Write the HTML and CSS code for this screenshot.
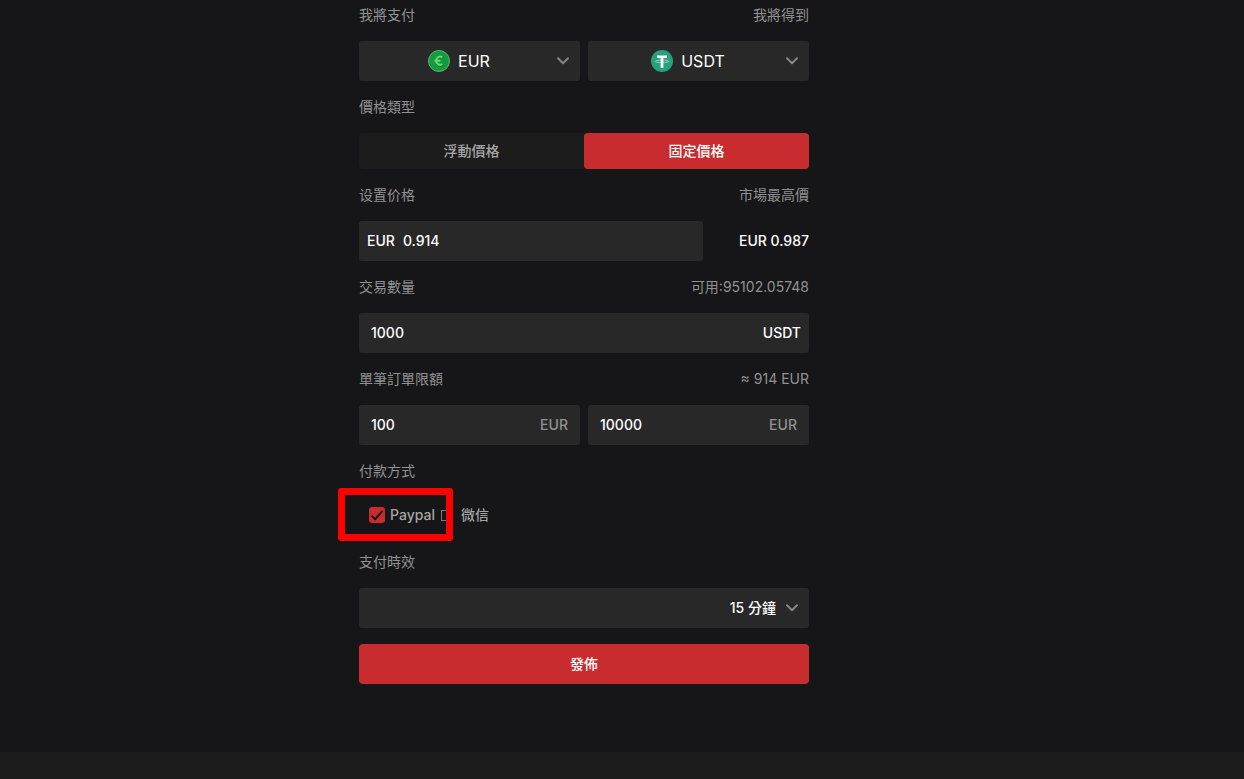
FILE: index.html
```
<!DOCTYPE html>
<html lang="zh-Hant">
<head>
<meta charset="UTF-8" />
<meta name="viewport" content="width=device-width, initial-scale=1" />
<title>發佈</title>
<link rel="stylesheet" href="styles.css">
</head>
<body>
  <main>
    <form class="order-form">
      <!-- Currency pair -->
      <div class="label-row">
        <label for="pay">我將支付</label>
        <label for="receive">我將得到</label>
      </div>
      <div class="columns">
        <div class="field picker">
          <div class="coin">
            <svg class="coin-icon" viewBox="0 0 22 22" aria-hidden="true">
              <circle cx="11" cy="11" r="10.5" fill="#159a3c" stroke="#58b671"/>
              <path d="M15 7.6A4.3 4.3 0 1 0 15 14.8" fill="none" stroke="#0b7a2b" stroke-width="2.4"/>
              <path d="M14.4 7.4A4 4 0 1 0 14.4 14" fill="none" stroke="#62dc7b" stroke-width="2"/>
              <path d="M6.4 10.7h6" stroke="#62dc7b" stroke-width="1.8"/>
            </svg>
            <select id="pay"><option>EUR</option></select>
          </div>
          <svg class="chevron" viewBox="0 0 12 8" aria-hidden="true"><path d="M1 1.2l5 5 5-5"/></svg>
        </div>
        <div class="field picker">
          <div class="coin">
            <svg class="coin-icon" viewBox="0 0 22 22" aria-hidden="true">
              <circle cx="11" cy="11" r="11" fill="#26a17b"/>
              <ellipse cx="11" cy="11.4" rx="6.8" ry="1.3" fill="none" stroke="#a9dccb" stroke-width=".8"/>
              <path d="M6 5.4h10v2.6h-3.6v9.8H9.6V8H6z" fill="#fff"/>
            </svg>
            <select id="receive"><option>USDT</option></select>
          </div>
          <svg class="chevron" viewBox="0 0 12 8" aria-hidden="true"><path d="M1 1.2l5 5 5-5"/></svg>
        </div>
      </div>

      <!-- Price -->
      <div class="label-row"><span>價格類型</span></div>
      <div class="segment">
        <button type="button">浮動價格</button>
        <button type="button" class="active">固定價格</button>
      </div>
      <div class="label-row">
        <label for="price">设置价格</label>
        <span>市場最高價</span>
      </div>
      <div class="price-row">
        <div class="field price-field">
          <span>EUR</span>
          <input id="price" type="text" value="0.914">
        </div>
        <span class="market-price">EUR 0.987</span>
      </div>

      <!-- Amount and limits -->
      <div class="label-row">
        <label for="amount">交易數量</label>
        <span>可用:95102.05748</span>
      </div>
      <div class="field amount-field">
        <input id="amount" type="text" value="1000">
        <span>USDT</span>
      </div>
      <div class="label-row">
        <label for="min">單筆訂單限額</label>
        <span>≈ 914 EUR</span>
      </div>
      <div class="columns">
        <div class="field">
          <input id="min" type="text" value="100">
          <span class="unit">EUR</span>
        </div>
        <div class="field">
          <input type="text" value="10000" aria-label="最高限額">
          <span class="unit">EUR</span>
        </div>
      </div>

      <!-- Payment -->
      <div class="label-row"><span>付款方式</span></div>
      <div class="methods">
        <label><input type="checkbox" checked>Paypal</label>
        <label><input type="checkbox">微信</label>
        <div class="highlight"></div>
      </div>
      <div class="label-row"><label for="time">支付時效</label></div>
      <div class="field time-field">
        <select id="time"><option>15 分鐘</option></select>
        <svg class="chevron" viewBox="0 0 12 8" aria-hidden="true"><path d="M1 1.2l5 5 5-5"/></svg>
      </div>
      <button type="submit" class="submit">發佈</button>
    </form>
  </main>
  <footer></footer>
</body>
</html>
```
FILE: styles.css
```
*, *::before {
  box-sizing: border-box;
}

body {
  margin: 0;
  min-height: 100vh;
  display: flex;
  flex-direction: column;
  background: #161618;
  color: #fff;
  font-family: Inter, "Noto Sans CJK TC", sans-serif;
  font-size: 14px;
  line-height: 20px;
}

input, select, button {
  font: inherit;
  color: inherit;
  background: none;
  border: none;
  padding: 0;
  margin: 0;
}

select {
  appearance: none;
  field-sizing: content;
  cursor: pointer;
}

option {
  background: #282828;
}

button {
  cursor: pointer;
}

main {
  width: 100%;
  max-width: 526px;
  margin: 0 auto;
  padding: 5px 76px 68px 0;
}

.label-row {
  display: flex;
  justify-content: space-between;
  padding: 16px 0;
  color: #919191;
}

.label-row:first-child {
  padding-top: 0;
}

.columns {
  display: grid;
  grid-template-columns: 1fr 1fr;
  gap: 8px;
}

.field {
  display: flex;
  align-items: center;
  min-width: 0;
  height: 40px;
  padding: 0 12px;
  border-radius: 3px;
  background: #282828;
  font-weight: 500;
}

.field input {
  flex: 1;
  min-width: 0;
}

.unit {
  color: #919191;
}

.picker {
  padding: 0 11px 0 2px;
  font-size: 16px;
  font-weight: 400;
}

.coin {
  flex: 1;
  display: flex;
  align-items: center;
  justify-content: center;
  gap: 8px;
}

.coin-icon {
  width: 22px;
  height: 22px;
}

.chevron {
  width: 12px;
  height: 8px;
  fill: none;
  stroke: #858585;
  stroke-width: 2;
  stroke-linecap: round;
  stroke-linejoin: round;
}

.segment {
  display: grid;
  grid-template-columns: 1fr 1fr;
  height: 36px;
  border-radius: 4px;
  background: #1c1c1c;
}

.segment button {
  border-radius: 4px;
  color: #a5a5a5;
  font-weight: 500;
}

.segment .active {
  background: #c92c2f;
  color: #fff;
}

.price-row {
  display: flex;
  align-items: center;
  justify-content: space-between;
  gap: 36px;
  font-weight: 500;
}

.price-field {
  flex: 1;
  gap: 8px;
  padding: 0 8px;
}

.amount-field {
  padding-right: 8px;
}

.methods {
  position: relative;
  display: flex;
  align-items: center;
  gap: 5px;
  height: 36px;
  margin-bottom: 3px;
  padding-left: 10px;
  color: #a5a5a5;
  font-weight: 500;
}

.methods label {
  display: flex;
  align-items: center;
  gap: 5px;
}

.methods input {
  appearance: none;
  display: flex;
  align-items: center;
  width: 16px;
  height: 16px;
  border-radius: 3px;
}

.methods input::before {
  content: "";
  width: 11px;
  height: 11px;
  margin-left: 1px;
  border: 1px solid #777;
}

.methods input:checked {
  justify-content: center;
  background: #c92c2f;
}

.methods input:checked::before {
  width: 12px;
  height: 6px;
  margin: 0 0 3px;
  border: solid #161618;
  border-width: 0 0 2px 2px;
  transform: rotate(-48deg);
}

/* Frame drawn over the first payment method */
.highlight {
  position: absolute;
  top: -9px;
  left: -21px;
  width: 115px;
  height: 53px;
  border: 7px solid #fe0000;
  border-radius: 3px;
  pointer-events: none;
}

.time-field {
  gap: 10px;
  padding-right: 11px;
}

.time-field select {
  flex: 1;
  text-align: right;
  text-align-last: right;
}

.submit {
  width: 100%;
  height: 40px;
  margin-top: 16px;
  border-radius: 4px;
  background: #c92c2f;
  font-weight: 500;
}

footer {
  flex: 1;
  background: #1c1c1c;
}
```
